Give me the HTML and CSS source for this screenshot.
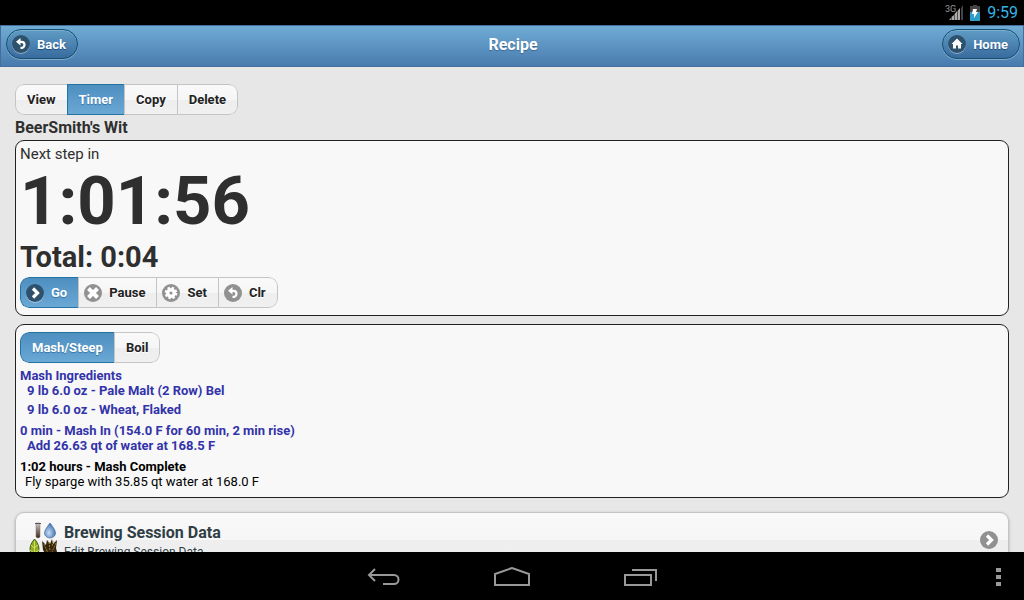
FILE: index.html
```html
<!DOCTYPE html>
<html lang="en">
<head>
    <meta charset="utf-8">
    <meta name="viewport" content="width=device-width, initial-scale=1">
    <title>Recipe</title>
    <link rel="stylesheet" href="styles.css">
</head>
<body>
    <!-- shared icons -->
    <svg class="defs" aria-hidden="true">
        <symbol id="icon-back" viewBox="0 0 18 18">
            <path d="M6.500 6.800H9.500a3 3 0 0 1 0 6H8.500" fill="none" stroke="currentColor" stroke-width="2.200"/>
            <path d="M4 6.800L8.500 3v7.500z" fill="currentColor"/>
        </symbol>
        <symbol id="icon-home" viewBox="0 0 18 18">
            <path d="M9 3.500L3.500 9H5v4.500h3v-3h2v3h3V9h1.500z" fill="currentColor"/>
        </symbol>
        <symbol id="icon-right" viewBox="0 0 18 18">
            <path d="M7 4.500L11.500 9L7 13.500" fill="none" stroke="currentColor" stroke-width="3.200"/>
        </symbol>
        <symbol id="icon-delete" viewBox="0 0 18 18">
            <path d="M4.500 4.500l9 9M13.500 4.500l-9 9" fill="none" stroke="currentColor" stroke-width="4"/>
        </symbol>
        <symbol id="icon-gear" viewBox="0 0 18 18">
            <circle cx="9" cy="9" r="5.200" fill="none" stroke="currentColor" stroke-width="2.200" stroke-dasharray="2.400 1.684"/>
            <circle cx="9" cy="9" r="3.300" fill="none" stroke="currentColor" stroke-width="3.400"/>
        </symbol>
    </svg>

    <div class="status-bar">
        <svg class="signal" width="20" height="18" viewBox="0 0 20 18" aria-hidden="true">
            <path d="M16 4l2-3v15h-2z" fill="#444"/>
            <path d="M4 16l2-2v2zM6.500 16v-3l2.500-2v5zM9.500 16V10l2.500-3v9zM12.500 16V7l2.500-3v12z" fill="#aaa"/>
            <text x="0" y="8">3G</text>
        </svg>
        <svg class="battery" width="10" height="16" viewBox="0 0 10 16" aria-hidden="true">
            <path d="M3 0h4v1h3v15H0V1h3z" fill="#444"/>
            <path d="M0 7h10v9H0z" fill="#2f9fc9"/>
            <path d="M3 4h4l-1 3h2l-4 6V9H2z" fill="#fff"/>
        </svg>
        <span class="clock">9:59</span>
    </div>

    <header class="header">
        <a class="nav-btn" href="#back"><svg class="icon"><use href="#icon-back"/></svg>Back</a>
        <h1>Recipe</h1>
        <a class="nav-btn" href="#home"><svg class="icon"><use href="#icon-home"/></svg>Home</a>
    </header>

    <main class="content">
        <div class="group">
            <button type="button">View</button>
            <button type="button" class="active">Timer</button>
            <button type="button">Copy</button>
            <button type="button">Delete</button>
        </div>
        <h2>BeerSmith's Wit</h2>

        <section class="panel timer">
            <div class="next">Next step in</div>
            <div class="countdown">1:01:56</div>
            <div class="total">Total: 0:04</div>
            <div class="group icons">
                <button type="button" class="active"><svg class="icon"><use href="#icon-right"/></svg>Go</button>
                <button type="button"><svg class="icon"><use href="#icon-delete"/></svg>Pause</button>
                <button type="button"><svg class="icon"><use href="#icon-gear"/></svg>Set</button>
                <button type="button"><svg class="icon"><use href="#icon-back"/></svg>Clr</button>
            </div>
        </section>

        <section class="panel steps">
            <div class="group">
                <button type="button" class="active">Mash/Steep</button>
                <button type="button">Boil</button>
            </div>
            <div class="ingredients done">
                <p>Mash Ingredients</p>
                <p class="detail">9 lb 6.0 oz - Pale Malt (2 Row) Bel</p>
                <p class="detail">9 lb 6.0 oz - Wheat, Flaked</p>
            </div>
            <div class="step done">
                <p>0 min - Mash In (154.0 F for 60 min, 2 min rise)</p>
                <p class="detail">Add 26.63 qt of water at 168.5 F</p>
            </div>
            <div class="step">
                <p>1:02 hours - Mash Complete</p>
                <p class="note">Fly sparge with 35.85 qt water at 168.0 F</p>
            </div>
        </section>

        <a class="list-item" href="#session">
            <svg class="thumb" width="30" height="40" viewBox="0 0 30 40" aria-hidden="true">
                <defs>
                    <linearGradient id="tube" x2="0" y2="1">
                        <stop offset="0" stop-color="#d4c8c4"/>
                        <stop offset="1" stop-color="#43221a"/>
                    </linearGradient>
                    <radialGradient id="drop" cx=".4" cy=".65" r=".6">
                        <stop offset="0" stop-color="#c5dcf5"/>
                        <stop offset="1" stop-color="#4474b4"/>
                    </radialGradient>
                </defs>
                <path d="M7 2h4v14q-2 2-4 0z" fill="url(#tube)" stroke="#777" stroke-width=".5"/>
                <path d="M6 2.500h6" stroke="#555"/>
                <path d="M21 2q-5.500 7-5.500 10a5.500 5 0 0 0 11 0Q26.500 9 21 2z" fill="url(#drop)" stroke="#476b9b" stroke-width=".7"/>
                <path d="M5.500 18q-6 7-4 13l4 6 4-6q2-6-4-13z" fill="#8fae25" stroke="#456016"/>
                <path d="M5.500 20v15M2 24l3 3 4-3M1 29l4 3 5-3" fill="none" stroke="#d5df59"/>
                <path d="M13 20l4 4 1-5 3 4 2-5 1 5 4-4-1 8 1 4-6 5h-4l-4-7z" fill="#35270f"/>
                <path d="M15 23l4 9M20 21l1 9M27 22l-4 9M24 20l-1 6M17 29l5 5" fill="none" stroke="#977b30" stroke-dasharray="2 1"/>
            </svg>
            <div class="text">
                <h3>Brewing Session Data</h3>
                <p>Edit Brewing Session Data</p>
            </div>
            <svg class="icon"><use href="#icon-right"/></svg>
        </a>
    </main>

    <nav class="system-bar">
        <div class="keys">
            <button type="button" aria-label="Back">
                <svg width="36" height="20" viewBox="0 0 36 20"><path d="M9 2L3 8l6 6M3 8h25a4.500 4.500 0 0 1 0 9H17"/></svg>
            </button>
            <button type="button" aria-label="Home">
                <svg width="36" height="20" viewBox="0 0 36 20"><path d="M1 18V7l17-6 17 6v11z"/></svg>
            </button>
            <button type="button" aria-label="Recent apps">
                <svg width="36" height="20" viewBox="0 0 36 20"><path d="M3 8h26v10H3zM10 3h24v11"/></svg>
            </button>
        </div>
        <button type="button" class="more" aria-label="Menu">
            <svg width="5" height="18" viewBox="0 0 5 18"><path d="M0 0h5v4H0zM0 7h5v4H0zM0 14h5v4H0z"/></svg>
        </button>
    </nav>
</body>
</html>
```
FILE: styles.css
```css
* {
    box-sizing: border-box;
}

body {
    margin: 0;
    height: 100vh;
    display: flex;
    flex-direction: column;
    background: #000;
    color: #2f2f2f;
    font-family: Roboto, "Liberation Sans", sans-serif;
    font-size: 13px;
}

h1, h2, h3, p {
    margin: 0;
    font-size: 16px;
    line-height: 20px;
}

button {
    font: inherit;
    color: inherit;
    margin: 0;
    border: 0;
    background: none;
}

.defs {
    position: absolute;
    width: 0;
    height: 0;
}

/* android bars */
.status-bar {
    flex: none;
    height: 25px;
    padding-right: 6px;
    display: flex;
    align-items: center;
    justify-content: flex-end;
}

.signal text {
    font-size: 9px;
    fill: #999;
}

.battery {
    margin: 0 7px 0 5px;
}

.clock {
    color: #33b5e5;
    font-size: 16px;
}

.system-bar {
    flex: none;
    height: 48px;
    padding-top: 2px;
    display: grid;
    grid-template-columns: 1fr auto 1fr;
    align-items: center;
}

.keys {
    grid-column: 2;
    display: flex;
    gap: 80px;
}

.system-bar button {
    padding: 0 6px;
}

.system-bar svg {
    display: block;
}

.keys path {
    fill: none;
    stroke: #999;
    stroke-width: 2;
}

.system-bar .more {
    justify-self: end;
    padding: 0 23px;
}

.more path {
    fill: #999;
}

/* header */
.header {
    flex: none;
    height: 42px;
    padding: 0 3px 4px 5px;
    display: grid;
    grid-template-columns: 1fr auto 1fr;
    align-items: center;
    border: 1px solid #456f9a;
    background: linear-gradient(#6facd5, #497bae);
    color: #fff;
    text-shadow: 0 1px 1px #3e6790;
}

.header h1 {
    padding-top: 2px;
}

.nav-btn {
    justify-self: start;
    height: 30px;
    padding: 0 11px 0 5px;
    display: flex;
    align-items: center;
    gap: 7px;
    border: 1px solid #145072;
    border-radius: 15px;
    background: linear-gradient(#5f9cc5, #396b9e);
    box-shadow: 0 1px 0 rgba(255, 255, 255, .3), inset 0 1px 0 rgba(255, 255, 255, .2);
    color: #fff;
    font-weight: bold;
    text-decoration: none;
    text-shadow: 0 1px 1px #194b7e;
}

.nav-btn:last-child {
    justify-self: end;
}

.icon {
    flex: none;
    width: 18px;
    height: 18px;
    border-radius: 50%;
    background: #919191;
    color: #fff;
}

.nav-btn .icon, .active .icon {
    background: #2e526d;
    box-shadow: 0 1px 0 rgba(255, 255, 255, .4);
}

/* page */
.content {
    flex: 1;
    min-height: 0;
    overflow: hidden;
    padding: 17px 15px 0;
    background: #e7e7e7;
}

.group {
    display: flex;
    width: fit-content;
    height: 31px;
    border-radius: 9px;
    overflow: hidden;
}

.group button {
    padding: 0 11px;
    display: flex;
    align-items: center;
    gap: 7px;
    border: 1px solid #c4c4c4;
    border-right-width: 0;
    background: linear-gradient(#f9f9f9, #f6f6f6 50%, #eee 51%, #f0f0f0);
    color: #222;
    font-weight: bold;
    text-shadow: 0 1px 0 #fff;
}

.group button:first-child {
    border-radius: 9px 0 0 9px;
}

.group button:last-child {
    border-right-width: 1px;
    border-radius: 0 9px 9px 0;
}

.group.icons button {
    padding-left: 5px;
}

.group .active {
    border-color: #2373a5;
    background: linear-gradient(#4e8fc0, #6aa8d5);
    color: #fff;
    text-shadow: 0 1px 1px #3373a5;
}

h2 {
    margin: 3px 0 2px;
}

.panel {
    margin-bottom: 8px;
    padding: 4px 4px 7px;
    border: 1px solid #222;
    border-radius: 9px;
    background: #f8f8f8;
}

.next {
    font-size: 15px;
    line-height: 18px;
}

.countdown {
    font-size: 67px;
    line-height: 76px;
    font-weight: bold;
}

.total {
    font-size: 29px;
    line-height: 36px;
    margin-bottom: 2px;
    font-weight: bold;
}

.steps {
    margin-bottom: 14px;
    padding: 7px 4px 8px;
    color: #000;
}

.steps .group {
    margin-bottom: 5px;
}

.steps p {
    font-size: 13px;
    line-height: 15px;
    font-weight: bold;
}

.step {
    margin-top: 6px;
}

.done {
    color: #3333aa;
}

.steps .detail {
    padding-left: 7px;
}

.detail + .detail {
    margin-top: 4px;
}

.steps .note {
    padding-left: 5px;
    font-weight: normal;
}

.list-item {
    height: 56px;
    padding: 0 10px 0 13px;
    display: flex;
    align-items: center;
    border: 1px solid #c4c4c4;
    border-radius: 9px;
    background: linear-gradient(#f9f9f9, #f6f6f6 50%, #eee 51%, #f0f0f0);
    box-shadow: 0 1px 3px rgba(0, 0, 0, .25);
    color: #2f3e46;
    text-decoration: none;
}

.thumb {
    margin-top: 2px;
}

.list-item .text {
    flex: 1;
    padding: 4px 0 0 5px;
}

.list-item p {
    font-size: 12px;
    line-height: 18px;
}
```
